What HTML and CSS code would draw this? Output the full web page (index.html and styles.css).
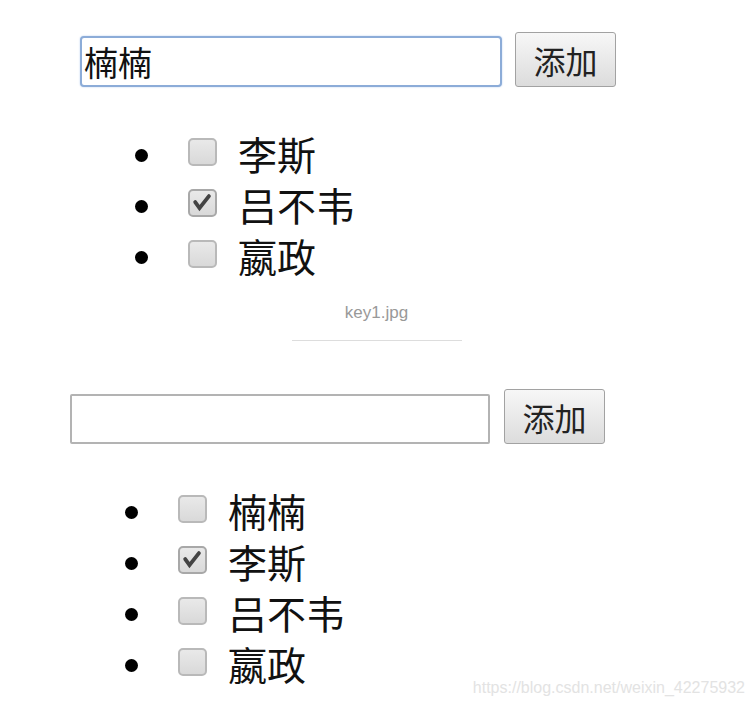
FILE: index.html
```html
<!DOCTYPE html>
<html>
<head>
    <title>key demo</title>
    <link rel="stylesheet" href="styles.css">
</head>
<body>
    <div class="shot shot-top">
        <div class="add-row">
            <input type="text" class="name-input focused" value="楠楠">
            <button class="add-btn">添加</button>
        </div>
        <ul class="todo">
            <li><span class="box"></span><span class="label">李斯</span></li>
            <li><span class="box checked"><svg viewBox="0 0 29 28" width="25" height="24"><path d="M6 13 L11 20 L22 6" fill="none" stroke="#444444" stroke-width="4.5" stroke-linecap="round" stroke-linejoin="miter"/></svg></span><span class="label">吕不韦</span></li>
            <li><span class="box"></span><span class="label">嬴政</span></li>
        </ul>
    </div>

    <p class="caption">key1.jpg</p>
    <hr class="caption-line">

    <div class="shot shot-bottom">
        <div class="add-row">
            <input type="text" class="name-input" value="">
            <button class="add-btn">添加</button>
        </div>
        <ul class="todo">
            <li><span class="box"></span><span class="label">楠楠</span></li>
            <li><span class="box checked"><svg viewBox="0 0 29 28" width="25" height="24"><path d="M6 13 L11 20 L22 6" fill="none" stroke="#444444" stroke-width="4.5" stroke-linecap="round" stroke-linejoin="miter"/></svg></span><span class="label">李斯</span></li>
            <li><span class="box"></span><span class="label">吕不韦</span></li>
            <li><span class="box"></span><span class="label">嬴政</span></li>
        </ul>
    </div>

    <div class="watermark">https://blog.csdn.net/weixin_42275932</div>
</body>
</html>
```

FILE: styles.css
```css
body {
    margin: 0;
    background-color: #ffffff;
    font-family: "Noto Sans CJK SC", "Liberation Sans", sans-serif;
    color: #111111;
    position: relative;
    min-height: 705px;
    overflow: hidden;
}
.shot-top {
    margin-left: 80px;
    padding-top: 32px;
}
.shot-bottom {
    margin-left: 70px;
    padding-top: 48px;
}
.add-row {
    display: flex;
    align-items: flex-end;
    gap: 13px;
}
.shot-bottom .add-row {
    gap: 14px;
}
.name-input {
    width: 422px;
    height: 51px;
    box-sizing: border-box;
    border: 2px solid #b3b3b3;
    border-radius: 2px;
    padding: 0 2px;
    font-family: "Noto Sans CJK SC", sans-serif;
    font-size: 34px;
    color: #111111;
    outline: none;
    background: #ffffff;
}
.shot-bottom .name-input {
    width: 420px;
    height: 50px;
}
.focused {
    border-color: #8cacd8;
    border-radius: 4px;
    box-shadow: 0 0 2px #b5cdee;
}
.add-btn {
    width: 101px;
    height: 55px;
    box-sizing: border-box;
    border: 1px solid #a2a2a2;
    border-radius: 3px;
    background: linear-gradient(#f7f7f7, #dcdcdc);
    font-family: "Noto Sans CJK SC", sans-serif;
    font-size: 32px;
    color: #222222;
    padding: 0;
    line-height: 1;
}
.todo {
    list-style: none;
    margin: 43px 0 0;
    padding: 0;
}
.todo li {
    display: flex;
    align-items: center;
    height: 51px;
}
.todo li::before {
    content: "";
    width: 13px;
    height: 13px;
    border-radius: 50%;
    background-color: #000000;
    margin-left: 55px;
    margin-right: 40px;
}
.box {
    display: flex;
    align-items: center;
    justify-content: center;
    width: 29px;
    height: 28px;
    box-sizing: border-box;
    border: 2px solid #b9b9b9;
    border-radius: 5px;
    background: linear-gradient(#e9e9e9, #d9d9d9);
    margin-right: 21px;
    margin-bottom: 8px;
}
.box.checked {
    border-color: #a8a8a8;
}
.label {
    font-size: 39px;
    line-height: 51px;
    margin-bottom: 4px;
}
.caption {
    margin: 19px 0 0;
    text-align: center;
    font-family: "Liberation Sans", Arial, sans-serif;
    font-size: 17px;
    line-height: 22px;
    color: #999999;
}
.caption-line {
    width: 170px;
    height: 1px;
    border: none;
    background-color: #dddddd;
    margin: 16px auto 0;
}
.watermark {
    position: absolute;
    right: 8px;
    bottom: 8px;
    font-family: "Liberation Sans", Arial, sans-serif;
    font-size: 16px;
    line-height: 18px;
    color: #e3e3e3;
}
```
